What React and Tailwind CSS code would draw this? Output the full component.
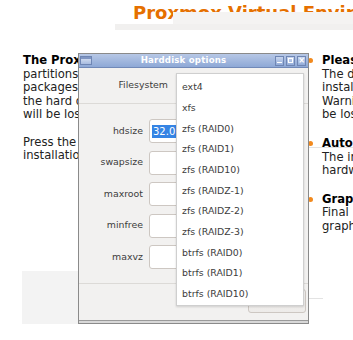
// Proxmox installer page with the "Harddisk options" dialog and open filesystem list
const leftLines = [
  { t: 'The Proxmox', b: true },
  { t: 'partitions all' },
  { t: 'packages and' },
  { t: 'the hard disk' },
  { t: 'will be lost.' },
  { t: '\u00a0' },
  { t: 'Press the Next' },
  { t: 'installation.' },
];

const fsOptions = [
  'ext4',
  'xfs',
  'zfs (RAID0)',
  'zfs (RAID1)',
  'zfs (RAID10)',
  'zfs (RAIDZ-1)',
  'zfs (RAIDZ-2)',
  'zfs (RAIDZ-3)',
  'btrfs (RAID0)',
  'btrfs (RAID1)',
  'btrfs (RAID10)',
];

const fields = ['hdsize', 'swapsize', 'maxroot', 'minfree', 'maxvz'];

const Bullet = ({ title, lines }) => (
  <div className="relative">
    <span className="absolute left-[-14px] top-[4px] w-[5px] h-[5px] rounded-full bg-[#f28a1e]"></span>
    <div className="font-bold text-black">{title}</div>
    {lines.map((l) => (
      <div key={l}>{l}</div>
    ))}
  </div>
);

const TitleBtn = ({ children }) => (
  <div className="w-[9px] h-[10px] border border-[#6f86b4] bg-gradient-to-b from-[#c9d6ee] to-[#93acd9] flex items-center justify-center">
    {children}
  </div>
);

const App = () => {
  return (
    <div className="relative w-[353px] h-[340px] overflow-hidden bg-white font-['DejaVu_Sans',sans-serif] text-[#222]">
      {/* page header */}
      <div className="pl-[133px] pt-[3px] text-[18px] leading-[20px] font-bold text-[#e57000] whitespace-nowrap">
        Proxmox Virtual Environment
      </div>
      {/* grey strip left over over the title */}
      <div className="absolute left-[173px] top-[12px] w-[180px] h-[18px] bg-[#f4f3f2]"></div>
      <div className="absolute left-[115px] top-[24px] w-[240px] h-[6px] bg-[#f1f0ef]"></div>

      {/* page body */}
      <div className="flex mt-[31px] text-[11.6px] leading-[13.6px]">
        <div className="pl-[23px] w-[180px] whitespace-nowrap">
          {leftLines.map((l, i) => (
            <div key={i} className={l.b ? 'font-bold text-black' : ''}>
              {l.t}
            </div>
          ))}
          <div className="mt-[108px] -ml-[1px] h-[53px] w-[150px] bg-[#f3f3f3]"></div>
        </div>
        <div className="ml-[150px] flex flex-col gap-[15px] whitespace-nowrap">
          <Bullet title="Please verify" lines={['The default', 'installation', 'Warning:', 'be lost.']} />
          <Bullet title="Automatic" lines={['The installer', 'hardware']} />
          <Bullet title="Graphical" lines={['Final', 'graphical']} />
        </div>
      </div>
      <div className="absolute left-[307px] top-[147px] w-[46px] h-[1px] bg-[#e3e3e3]"></div>
      <div className="absolute left-[303px] top-[298px] w-[20px] h-[1px] bg-[#e3e3e3]"></div>

      {/* dialog window */}
      <div className="absolute left-[78px] top-[53px] w-[231px] h-[271px] border border-[#8a8a8a] bg-[#f2f1f0] flex flex-col text-[9.4px] text-[#3c3c3c]">
        <div className="h-[14px] flex items-center px-[1px] bg-gradient-to-b from-[#b7c8e6] to-[#8ea8d6] border-b border-[#7189b8]">
          <div className="w-[12px] h-[9px] border border-[#6f86b4] bg-gradient-to-b from-[#dde5f4] to-[#a8bce0] flex items-start">
            <div className="w-full h-[2px] bg-[#7f95c2]"></div>
          </div>
          <div className="flex-1 text-center font-bold text-[8.6px] text-white tracking-[0.2px]">Harddisk options</div>
          <div className="flex gap-[2px] mr-[1px]">
            <TitleBtn>
              <div className="w-[5px] h-[1px] bg-white mt-[4px]"></div>
            </TitleBtn>
            <TitleBtn>
              <div className="w-[5px] h-[5px] border border-white"></div>
            </TitleBtn>
            <TitleBtn>
              <span className="text-white text-[8px] leading-none font-bold">×</span>
            </TitleBtn>
          </div>
        </div>

        <div className="flex-1 flex flex-col">
          <div className="h-[36px] flex items-center border-b border-[#dcdad7]">
            <div className="w-[89px] text-right">Filesystem</div>
          </div>
          <div className="flex flex-col gap-[7.5px] pt-[15px]">
            {fields.map((f, i) => (
              <div key={f} className="flex items-center h-[24px]">
                <div className="w-[64px] text-right">{f}</div>
                <div className="ml-[6px] w-[60px] h-[24px] rounded-[3px] border border-[#cdc7c2] bg-white flex items-center pl-[2px]">
                  {i === 0 && <span className="bg-[#3584e4] text-white px-[1px] text-[10px] leading-[13px]">32.0</span>}
                </div>
              </div>
            ))}
          </div>
          <div className="mt-auto h-[37px] border-t border-[#dcdad7] flex justify-end items-center pr-[2px] pb-[2px]">
            <div className="w-[58px] h-[24px] rounded-[3px] border border-[#cdc7c2] bg-gradient-to-b from-[#f6f5f4] to-[#edebe9] flex items-center justify-center">OK</div>
          </div>
        </div>
        <div className="h-[3px] border-t border-[#9a9a9a] bg-[#d8d8d8]"></div>
      </div>

      {/* open filesystem dropdown */}
      <div className="absolute left-[176px] top-[73px] w-[128px] h-[233px] bg-white border border-[#cfcfcf] shadow-[0_1px_2px_rgba(0,0,0,0.15)] pt-[3px] text-[9.4px] text-[#3c3c3c]">
        {fsOptions.map((o) => (
          <div key={o} className="h-[20.7px] flex items-center pl-[5px] whitespace-nowrap">
            {o}
          </div>
        ))}
      </div>
    </div>
  );
};

export default App;
